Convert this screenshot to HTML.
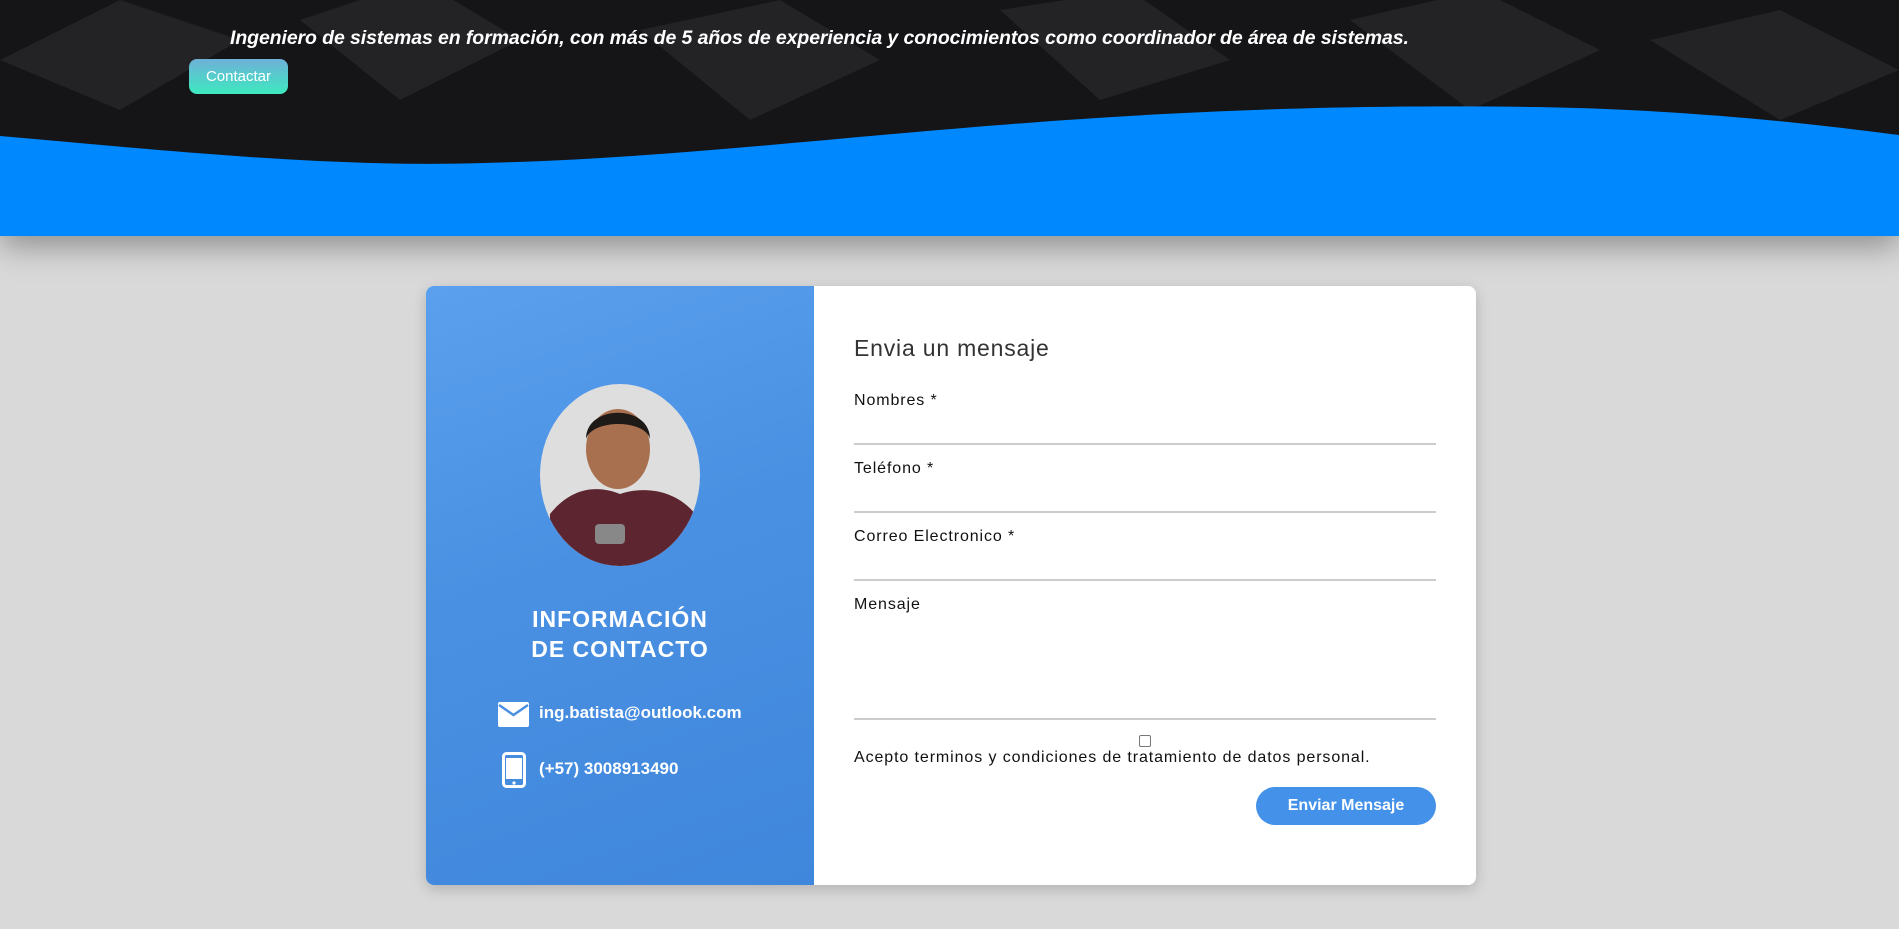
<!DOCTYPE html>
<html><head><meta charset="utf-8"><style>
*{margin:0;padding:0;box-sizing:border-box}
body{width:1899px;height:929px;background:#d9d9d9;font-family:"Liberation Sans",sans-serif;position:relative;overflow:hidden}
.hero{position:absolute;left:0;top:0;width:1899px;height:236px;background:#151517;box-shadow:0 10px 30px rgba(0,0,0,.35);overflow:hidden}
.tag{position:absolute;left:230px;top:27px;color:#fff;font-style:italic;font-weight:bold;font-size:19.5px;white-space:nowrap;letter-spacing:-0.1px}
.btn1{position:absolute;left:189px;top:59px;width:99px;height:35px;border-radius:8px;background:linear-gradient(#6fb0d8,#3de9c0);color:#fff;font-size:15px;line-height:35px;text-align:center}
.card{position:absolute;left:426px;top:286px;width:1050px;height:599px;border-radius:8px;background:#fff;box-shadow:0 4px 14px rgba(0,0,0,.18);overflow:hidden}
.left{position:absolute;left:0;top:0;width:388px;height:599px;background:linear-gradient(160deg,#5aa0ee 0%,#4a90e2 45%,#3f87dc 100%)}
.photo{position:absolute;left:114px;top:98px;width:160px;height:182px;border-radius:50%;overflow:hidden;background:#dedede}
.h{position:absolute;left:0;width:388px;top:318px;text-align:center;color:#fff;font-size:23px;font-weight:bold;line-height:30px;letter-spacing:1px}
.info{position:absolute;color:#fff;font-weight:bold;font-size:17px}
.t{position:absolute;left:854px;top:335px;font-size:23px;color:#333;letter-spacing:.8px}
.lab{position:absolute;left:854px;font-size:16px;color:#111;letter-spacing:.9px}
.line{position:absolute;left:854px;width:582px;height:2px;background:#ccc}
.send{position:absolute;left:1256px;top:787px;width:180px;height:38px;border-radius:19px;background:#4391e8;color:#fff;font-weight:bold;font-size:16px;text-align:center;line-height:38px}
</style></head><body>
<div class="hero">
<svg width="1899" height="236" style="position:absolute;left:0;top:0">
<g fill="#232326"><path d="M0 60 L120 0 L240 40 L120 110Z"/><path d="M300 20 L420 -20 L520 40 L400 100Z"/><path d="M640 30 L780 0 L880 60 L750 120Z"/><path d="M1000 10 L1130 -10 L1230 60 L1100 100Z"/><path d="M1350 20 L1480 -10 L1600 50 L1470 110Z"/><path d="M1650 40 L1780 10 L1899 70 L1780 120Z"/></g>
<path d="M0 136 C160 150 330 168 484 163 C800 155 1050 100 1538 107 C1700 110 1820 125 1899 135 L1899 236 L0 236Z" fill="#0088ff"/>
</svg>
<div class="tag">Ingeniero de sistemas en formación, con más de 5 años de experiencia y conocimientos como coordinador de área de sistemas.</div>
<div class="btn1">Contactar</div>
</div>
<div class="card">
<div class="left">
<div class="photo"><svg width="160" height="182" viewBox="0 0 160 182"><path d="M10 182 L10 130 C30 105 55 100 80 110 C110 100 140 110 155 130 L160 182Z" fill="#5c2530"/><ellipse cx="78" cy="65" rx="32" ry="40" fill="#a9704f"/><path d="M46 55 C46 20 110 20 110 55 C105 35 52 35 46 55Z" fill="#1e1a18"/><rect x="55" y="140" width="30" height="20" rx="4" fill="#888"/></svg></div>
<div class="h">INFORMACIÓN<br>DE CONTACTO</div>
<svg style="position:absolute;left:72px;top:416px" width="31" height="25" viewBox="0 0 31 25"><rect width="31" height="25" rx="2" fill="#fff"/><path d="M1 3 L15.5 13 L30 3" stroke="#4a90e2" stroke-width="2.5" fill="none"/></svg>
<div class="info" style="left:113px;top:417px">ing.batista@outlook.com</div>
<svg style="position:absolute;left:76px;top:466px" width="24" height="36" viewBox="0 0 24 36"><rect x="1.5" y="1.5" width="21" height="33" rx="3" fill="none" stroke="#fff" stroke-width="3"/><rect x="4" y="6" width="16" height="21" fill="#fff"/><circle cx="12" cy="31" r="1.6" fill="#fff"/></svg>
<div class="info" style="left:113px;top:473px">(+57) 3008913490</div>
</div>
</div>
<div class="t">Envia un mensaje</div>
<div class="lab" style="top:392px">Nombres *</div><div class="line" style="top:443px"></div>
<div class="lab" style="top:460px">Teléfono *</div><div class="line" style="top:511px"></div>
<div class="lab" style="top:528px">Correo Electronico *</div><div class="line" style="top:579px"></div>
<div class="lab" style="top:596px">Mensaje</div><div class="line" style="top:718px"></div>
<div style="position:absolute;left:1139px;top:735px;width:12px;height:12px;border:1px solid #777;border-radius:2px;background:#fff"></div>
<div class="lab" style="top:749px">Acepto terminos y condiciones de tratamiento de datos personal.</div>
<div class="send">Enviar Mensaje</div>
</body></html>
